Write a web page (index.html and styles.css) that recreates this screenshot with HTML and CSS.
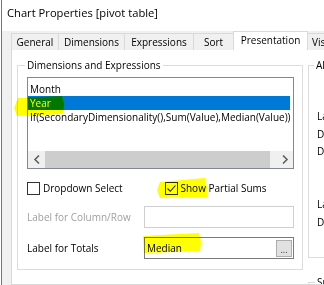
FILE: index.html
```html
<!DOCTYPE html>
<html>
<head>
<meta charset="utf-8">
<link rel="stylesheet" href="styles.css">
</head>
<body>
<div class="window">
  <div class="titlebar">Chart Properties [pivot table]</div>
  <div class="client">
    <div class="tabs">
      <div class="tab t-general">General</div>
      <div class="tab t-dims">Dimensions</div>
      <div class="tab t-expr">Expressions</div>
      <div class="tab t-sort">Sort</div>
      <div class="tab active t-pres">Presentation</div>
      <div class="tab t-vis">Visual Cues</div>
    </div>
    <div class="page">
      <div class="group group-main">
        <div class="group-label">Dimensions and Expressions</div>
        <div class="listbox">
          <div class="items">
            <div class="item">Month</div>
            <div class="item selected">Year</div>
            <div class="item">If(SecondaryDimensionality(),Sum(Value),Median(Value))</div>
          </div>
          <div class="hscroll">
            <div class="sbtn"><svg width="8" height="9" viewBox="0 0 8 9"><polyline points="6,0.5 2,4.5 6,8.5" fill="none" stroke="#606060" stroke-width="1.6"/></svg></div>
            <div class="track"><div class="thumb"></div></div>
            <div class="sbtn"><svg width="8" height="9" viewBox="0 0 8 9"><polyline points="2,0.5 6,4.5 2,8.5" fill="none" stroke="#606060" stroke-width="1.6"/></svg></div>
          </div>
        </div>
        <div class="check-row">
          <div class="check"><span class="box"></span><span>Dropdown Select</span></div>
          <div class="check"><span class="box"><svg width="11" height="11" viewBox="0 0 11 11"><polyline points="1.5,5.5 4.3,8.3 9.5,2.5" fill="none" stroke="#222" stroke-width="1.1"/></svg></span><span>Show Partial Sums</span></div>
        </div>
        <div class="field-row disabled">
          <span class="field-label">Label for Column/Row</span>
          <div class="textbox"></div>
        </div>
        <div class="field-row totals">
          <span class="field-label">Label for Totals</span>
          <div class="textbox"><span class="value">Median</span><span class="dots">...</span></div>
        </div>
      </div>
      <div class="side">
        <div class="group group-align">
          <div class="group-label">Alignment</div>
          <div class="al-row">Label</div>
          <div class="al-row">Data (Numeric)</div>
          <div class="al-row">Data (Text)</div>
          <div class="al-row al-sep">Label (Vertical)</div>
          <div class="al-row al-last">Data (Vertical)</div>
        </div>
        <div class="group group-sub">
          <div class="group-label">Subtotals</div>
        </div>
      </div>
    </div>
  </div>
</div>
<svg class="marker" width="324" height="285" viewBox="0 0 324 285">
  <polygon points="18,98 62,96 64,104 63,114 17,116 14,108" fill="#ffff00"/>
  <polygon points="160,182 205,178 207,188 207,197 160,198 157,190" fill="#ffff00"/>
  <polygon points="143,236 199,233 201,242 200,251 144,253" fill="#ffff00"/>
</svg>
</body>
</html>
```

FILE: styles.css
```css
* { box-sizing: border-box; }
html, body { margin: 0; padding: 0; }
body {
  position: relative;
  width: 324px;
  height: 285px;
  overflow: hidden;
  background: #ffffff;
  font-family: "Open Sans", "Noto Sans", sans-serif;
  font-size: 10px;
  color: #000;
}
.window {
  height: 285px;
  margin-left: 1px;
  border-left: 1px solid #3a84cf;
  background: #f0f0f0;
  display: flex;
  flex-direction: column;
}
.titlebar {
  height: 31px;
  background: #ffffff;
  padding: 5px 0 0 5px;
  font-size: 11.2px;
  line-height: 16px;
  white-space: nowrap;
}
.client {
  flex: 1;
  display: flex;
  flex-direction: column;
  min-height: 0;
}
.tabs {
  position: relative;
  z-index: 1;
  display: flex;
  align-items: flex-end;
  height: 19px;
  padding-left: 9px;
  overflow: hidden;
}
.tab {
  flex: none;
  height: 17px;
  border: 1px solid #d9d9d9;
  border-bottom: none;
  margin-right: -1px;
  padding-top: 1px;
  line-height: 14px;
  text-align: center;
  background: #f0f0f0;
  white-space: nowrap;
  overflow: hidden;
}
.tab.active {
  height: 20px;
  margin-bottom: -1px;
  background: #ffffff;
  position: relative;
  z-index: 1;
}
.t-general { width: 48px; }
.t-dims { width: 67px; }
.t-expr { width: 70px; }
.t-sort { width: 41px; }
.t-pres { width: 75px; }
.t-vis { width: 80px; text-align: left; padding-left: 4px; }

.page {
  flex: 1;
  margin-left: 9px;
  margin-top: -1px;
  border: 1px solid #d9d9d9;
  border-right: none;
  background: #ffffff;
  display: flex;
  align-items: flex-start;
  gap: 5px;
  padding: 15px 0 0 5px;
  overflow: hidden;
}
.group {
  position: relative;
  border: 1px solid #dcdcdc;
  flex: none;
}
.group-label {
  position: absolute;
  top: -8px;
  left: 7px;
  padding: 0 2px;
  line-height: 14px;
  background: #ffffff;
  white-space: nowrap;
}
.group-main {
  width: 286px;
  padding: 11px 0 10px 9px;
}
.listbox {
  width: 267px;
  height: 92px;
  border: 1px solid #828790;
  background: #ffffff;
  display: flex;
  flex-direction: column;
  overflow: hidden;
}
.items {
  flex: 1;
  width: 262px;
  padding-top: 4px;
}
.item {
  height: 14px;
  line-height: 14px;
  padding-left: 2px;
  white-space: nowrap;
}
.item.selected {
  background: #0078d7;
  color: #ffffff;
}
.hscroll {
  height: 17px;
  flex: none;
  display: flex;
  background: #f0f0f0;
}
.sbtn {
  width: 17px;
  display: flex;
  align-items: center;
  justify-content: center;
}
.track {
  flex: 1;
  padding-right: 6px;
}
.thumb {
  width: 225px;
  height: 100%;
  background: #cdcdcd;
}
.check-row {
  display: flex;
  align-items: center;
  height: 14px;
  margin-top: 12px;
}
.check {
  display: flex;
  align-items: center;
  width: 150px;
  line-height: 14px;
  white-space: nowrap;
}
.box {
  width: 13px;
  height: 13px;
  border: 1px solid #333333;
  background: #ffffff;
  margin-right: 3px;
  display: flex;
}
.field-row {
  display: flex;
  align-items: center;
  margin-top: 11px;
  line-height: 14px;
}
.field-row.totals { margin-top: 9px; }
.field-label {
  width: 117px;
  white-space: nowrap;
}
.textbox {
  width: 150px;
  height: 22px;
  border: 1px solid #7a7a7a;
  background: #ffffff;
  display: flex;
  align-items: center;
  padding-left: 2px;
}
.disabled .field-label { color: #a0a0a0; }
.disabled .textbox { border-color: #cfcfcf; }
.value { flex: 1; }
.dots {
  width: 16px;
  height: 17px;
  margin-right: 1px;
  background: #e1e1e1;
  border: 1px solid #adadad;
  font-size: 9px;
  line-height: 17px;
  text-align: center;
  color: #333;
}
.side {
  display: flex;
  flex-direction: column;
}
.group-align {
  width: 100px;
  height: 193px;
  padding: 43px 0 0 8px;
}
.al-row {
  height: 14px;
  line-height: 14px;
  margin-bottom: 3.5px;
  white-space: nowrap;
}
.al-sep { margin-top: 39px; }
.group-sub {
  width: 100px;
  height: 40px;
  margin-top: 24px;
}
.group-sub .group-label { left: 6px; }
.group-align .group-label { left: 5px; }
.marker {
  position: absolute;
  left: 0;
  top: 0;
  mix-blend-mode: multiply;
  pointer-events: none;
}
```
